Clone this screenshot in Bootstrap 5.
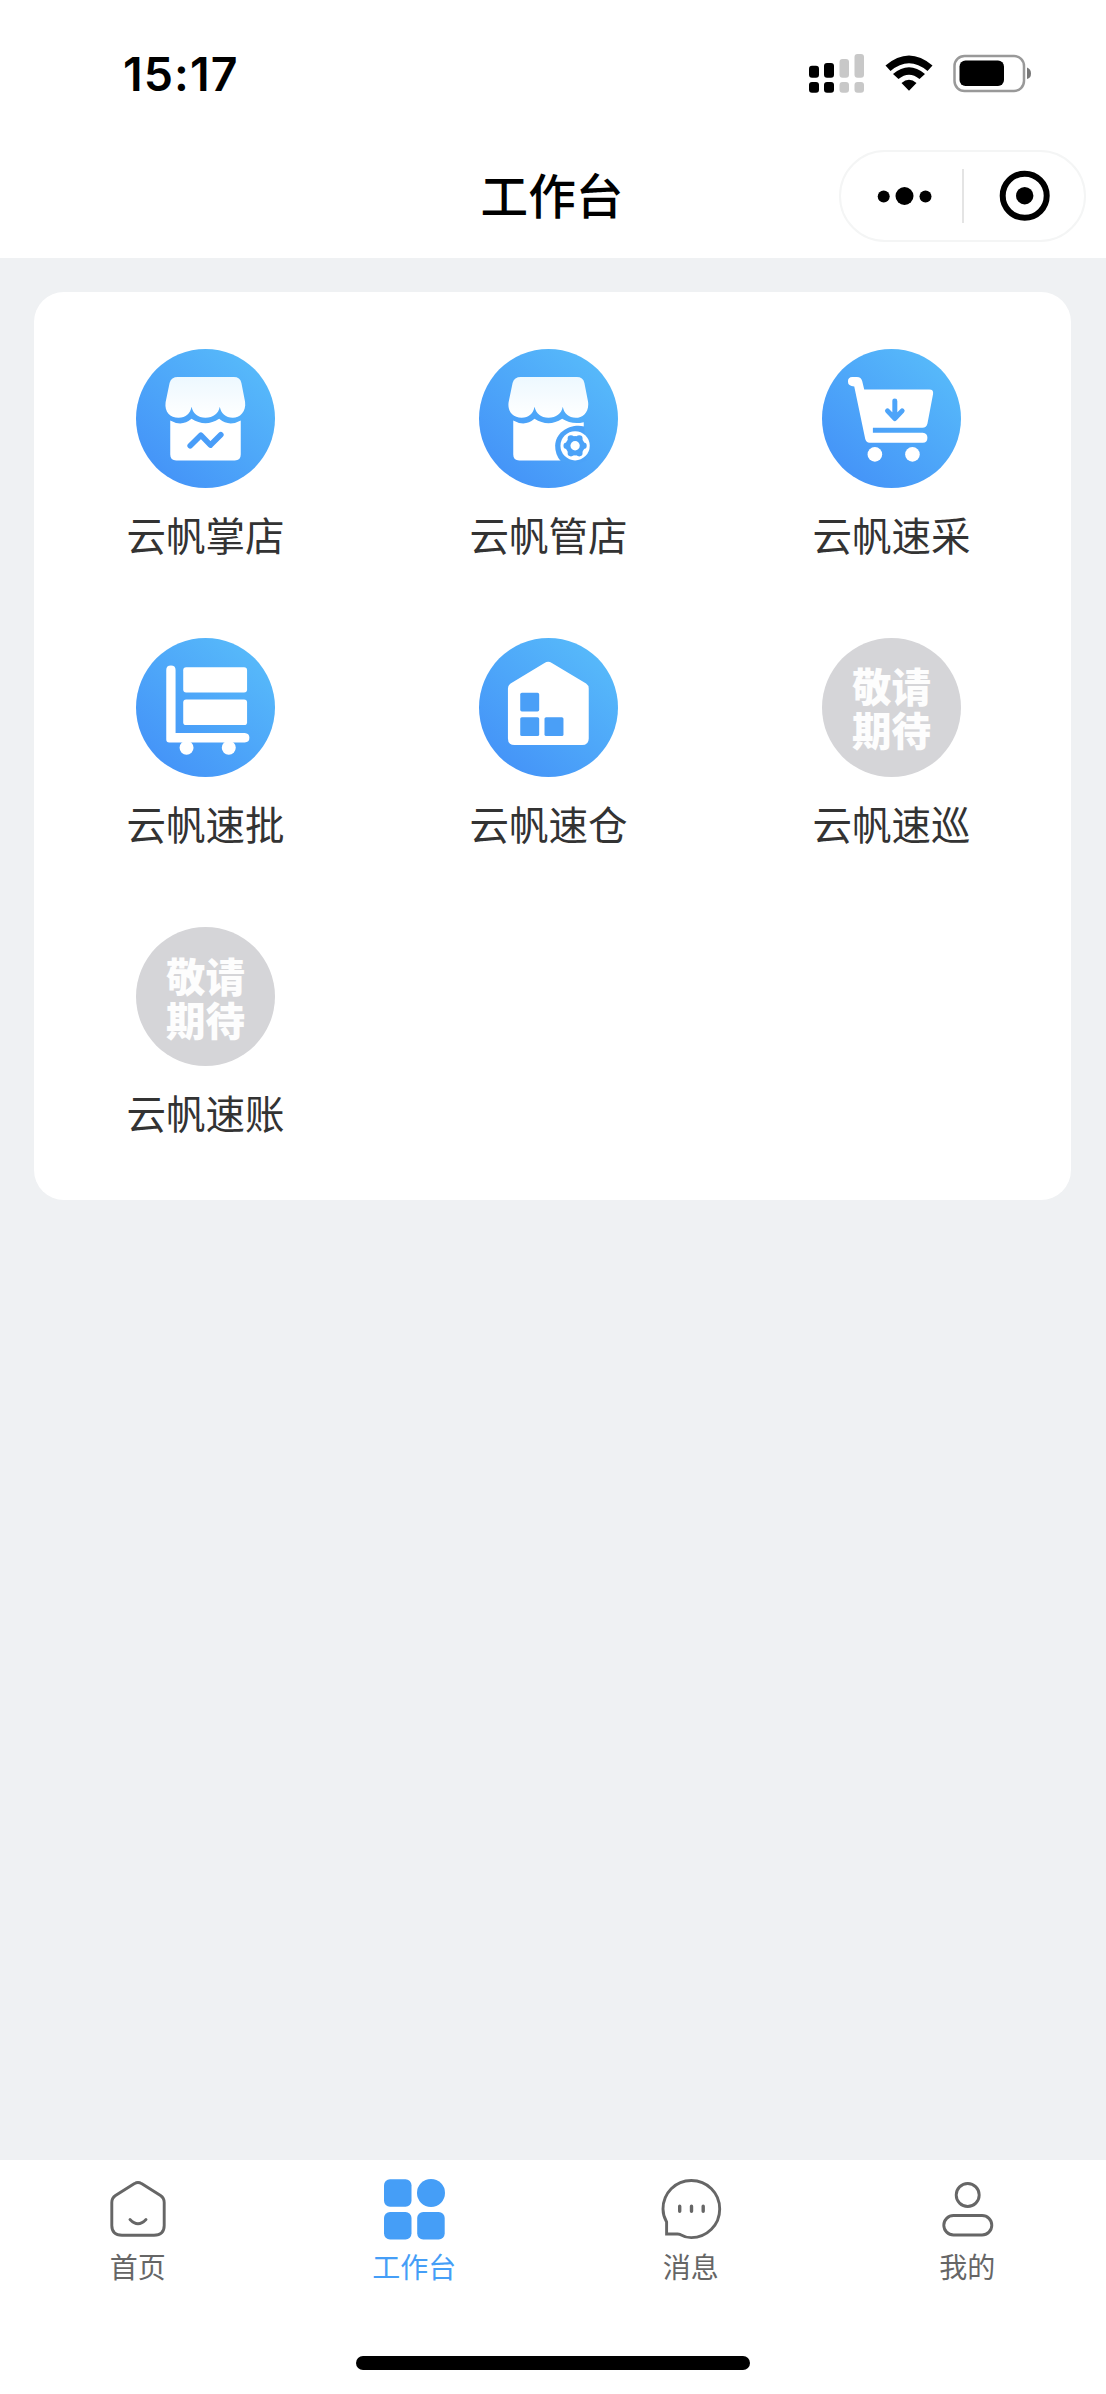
<!DOCTYPE html>
<html lang="zh-CN">
<head>
<meta charset="utf-8">
<meta name="viewport" content="width=device-width, initial-scale=1">
<title>工作台</title>
<link rel="stylesheet" href="https://cdn.jsdelivr.net/npm/bootstrap@5.3.0/dist/css/bootstrap.min.css">
<style>
  body { font-family: "Noto Sans CJK SC", sans-serif; background: #eff1f3; color: #333; }
  .phone { height: 2394px; overflow: hidden; }
  .topbar { height: 258px; }
  .statusbar { height: 146px; padding: 52px 75px 0 123px; }
  .clock { font: 600 46.5px/44px Inter, sans-serif; color: #000; letter-spacing: 1.1px; }
  .titlebar { height: 112px; padding-right: 20px; }
  .page-title { font-size: 47.6px; line-height: 70px; font-weight: 500; color: #000; top: 13px; left: -1px; }
  .capsule { width: 247px; height: 92px; margin-top: 4px; border: 2px solid #f4f5f5; }
  .apps { margin: 34px 35px 0 34px; height: 908px; border-radius: 30px; padding: 56.5px 8px 0 0; }
  .app-item { height: 289.3px; }
  .app-icon { width: 139px; height: 139px; }
  .app-name { font-size: 39.5px; line-height: 56px; margin-top: 18px; }
  .soon { background: #d5d5d8; color: #fdfdfd; font-size: 39.5px; line-height: 44px; font-weight: 900; }
  .tabbar { height: 234px; padding-top: 17px; }
  .tab-icon { width: 66px; height: 64px; }
  .tab-item { color: #666; font-size: 28px; line-height: 40px; }
  .tab-item.active { color: #459ef7; }
  .tab-text { margin: 5px 1px 0 0; }
  .home-bar { width: 394px; height: 14px; background: #000; bottom: 24px; left: 356px; }
</style>
<script src="https://cdn.jsdelivr.net/npm/bootstrap@5.3.0/dist/js/bootstrap.bundle.min.js"></script>
</head>
<body>
<svg width="0" height="0" class="position-absolute">
  <defs>
    <linearGradient id="blue" x1="0.2" y1="0.9" x2="0.85" y2="0.15">
      <stop offset="0" stop-color="#4595f8"/><stop offset="1" stop-color="#56b8fa"/>
    </linearGradient>
    <linearGradient id="awning" x1="0" y1="0" x2="0" y2="1">
      <stop offset="0" stop-color="#edf8ff"/><stop offset="1" stop-color="#fff"/>
    </linearGradient>
  </defs>
</svg>
<div class="phone d-flex flex-column">
  <header class="topbar bg-white">
    <div class="statusbar d-flex justify-content-between align-items-start">
      <div class="clock">15:17</div>
      <svg width="226" height="44" viewBox="0 0 226 44">
        <g fill="#000">
          <rect x="4" y="13.700" width="10" height="12" rx="3"/><rect x="19" y="11" width="10" height="14.700" rx="3"/>
          <rect x="4" y="30" width="10" height="10.700" rx="3"/><rect x="19" y="30" width="10" height="10.700" rx="3"/>
        </g>
        <g fill="#c8c8c8">
          <rect x="34.500" y="7" width="9.500" height="18.700" rx="3"/><rect x="49.500" y="2" width="9.500" height="23.700" rx="3"/>
          <rect x="34.500" y="30" width="9.500" height="10.700" rx="3"/><rect x="49.500" y="30" width="9.500" height="10.700" rx="3"/>
        </g>
        <path d="M80.500 13.500Q104-6.500 127.500 13.500L122.500 19Q104 3.500 85.500 19ZM88 22Q104 8.500 120 22L114.500 27Q104 18.500 93.500 27ZM96.500 31Q104 24.500 111.500 31L104 38.700Z"/>
        <rect x="149.500" y="4" width="69.500" height="35" rx="10" fill="#fff" stroke="#999" stroke-width="2.500"/>
        <rect x="154.500" y="8.500" width="44.500" height="25.500" rx="6"/>
        <path d="M222 15.500Q226 17 226 21.500Q226 26 222 27Z" fill="#777"/>
      </svg>
    </div>
    <div class="titlebar position-relative d-flex justify-content-end align-items-start">
      <h1 class="page-title position-absolute w-100 text-center mb-0">工作台</h1>
      <div class="capsule rounded-pill position-relative">
        <svg class="d-block" width="243" height="88" viewBox="0 0 243 88">
          <circle cx="42.700" cy="44.500" r="6"/><circle cx="63.500" cy="44" r="9"/><circle cx="84.500" cy="44.500" r="6"/>
          <path d="M122 17V71" stroke="#dedede" stroke-width="1.600"/>
          <circle cx="183.700" cy="43.700" r="22" fill="none" stroke="#000" stroke-width="6"/><circle cx="183.700" cy="43.700" r="8.700"/>
        </svg>
      </div>
    </div>
  </header>

  <main class="flex-grow-1">
    <section class="apps bg-white">
      <div class="row row-cols-3 g-0 text-center">
        <div class="col app-item">
          <svg class="app-icon d-block mx-auto" viewBox="108 55 418 418">
            <circle cx="317" cy="264" r="209" fill="url(#blue)"/>
            <path d="M211 270Q246 290 275 265Q317 292 358 265Q388 290 423 270V372Q423 390 405 390H229Q211 390 211 372Z" fill="#fff"/>
            <path d="M234 139H402Q421 139 425 157L436 214C440 245 420 262 399 262C378 262 364 250 360 229C356 250 340 262 317 262C294 262 280 250 275 229C271 250 258 262 236 262C211 262 193 244 197 215L209 157Q214 139 234 139Z" fill="url(#awning)"/>
            <path d="M271 346L303 314L332 344L363 313" fill="none" stroke="#499df8" stroke-width="17" stroke-linecap="round" stroke-linejoin="round"/>
          </svg>
          <div class="app-name">云帆掌店</div>
        </div>
        <div class="col app-item">
          <svg class="app-icon d-block mx-auto" viewBox="118 55 418 418">
            <circle cx="327" cy="264" r="209" fill="url(#blue)"/>
            <g transform="translate(10 0)">
              <path d="M211 270Q246 290 275 265Q317 292 358 265Q388 284 423 275V390H229Q211 390 211 372Z" fill="#fff"/>
              <path d="M234 139H402Q421 139 425 157L436 214C440 245 420 262 399 262C378 262 364 250 360 229C356 250 340 262 317 262C294 262 280 250 275 229C271 250 258 262 236 262C211 262 193 244 197 215L209 157Q214 139 234 139Z" fill="url(#awning)"/>
            </g>
            <path d="M434 288C400 278 348 300 347 346Q347 373 363 391L400 405L440 390Z" fill="#4ba2f8"/>
            <circle cx="407" cy="346" r="44" fill="#fff"/>
            <g fill="#4ba2f8"><circle cx="407" cy="346" r="29"/>
              <circle cx="382" cy="346" r="10"/><circle cx="394.500" cy="324" r="10"/><circle cx="419.500" cy="324" r="10"/><circle cx="432" cy="346" r="10"/><circle cx="419.500" cy="368" r="10"/><circle cx="394.500" cy="368" r="10"/>
            </g>
            <circle cx="407" cy="346" r="14" fill="#fff"/>
          </svg>
          <div class="app-name">云帆管店</div>
        </div>
        <div class="col app-item">
          <svg class="app-icon d-block mx-auto" viewBox="97 55 418 418">
            <circle cx="306" cy="264" r="209" fill="url(#blue)"/>
            <path d="M188 139H202Q215 139 218 152L224 177H420Q433 177 431 190L414 280Q411 292 399 292H250V307H400Q414 308 414 322Q414 337 400 337H240Q230 337 227 326L194 168Q175 167 175 153Q175 139 188 139Z" fill="#fff"/>
            <path d="M316 211V264M294 241L316 264L338 241" fill="none" stroke="#4da4f9" stroke-width="15" stroke-linecap="round" stroke-linejoin="round"/>
            <circle cx="256" cy="372" r="22" fill="#fff"/><circle cx="369" cy="372" r="22" fill="#fff"/>
          </svg>
          <div class="app-name">云帆速采</div>
        </div>
        <div class="col app-item">
          <svg class="app-icon d-block mx-auto" viewBox="108 53 418 418">
            <circle cx="317" cy="262" r="209" fill="url(#blue)"/>
            <g fill="#fff">
              <path d="M199 149Q199 136 213 136Q227 136 227 149V339H435Q449 340 449 353Q449 367 435 367H208Q199 367 199 358Z"/>
              <rect x="250" y="141" width="192" height="76" rx="9"/><rect x="250" y="238" width="192" height="77" rx="9"/>
              <circle cx="260" cy="383" r="21"/><circle cx="387" cy="383" r="21"/>
            </g>
          </svg>
          <div class="app-name">云帆速批</div>
        </div>
        <div class="col app-item">
          <svg class="app-icon d-block mx-auto" viewBox="118 53 418 418">
            <circle cx="327" cy="262" r="209" fill="url(#blue)"/>
            <path d="M315 128Q326 121 337 128L440 190Q448 195 448 205V355Q448 375 428 375H225Q205 375 205 355V205Q205 195 213 190Z" fill="#fff"/>
            <g fill="#4a9ff7"><rect x="242" y="218" width="57" height="56" rx="5"/><rect x="242" y="291" width="57" height="57" rx="5"/><rect x="315" y="291" width="57" height="57" rx="5"/></g>
          </svg>
          <div class="app-name">云帆速仓</div>
        </div>
        <div class="col app-item">
          <div class="app-icon soon rounded-circle mx-auto d-flex flex-column justify-content-center"><div>敬请</div><div>期待</div></div>
          <div class="app-name">云帆速巡</div>
        </div>
        <div class="col app-item">
          <div class="app-icon soon rounded-circle mx-auto d-flex flex-column justify-content-center"><div>敬请</div><div>期待</div></div>
          <div class="app-name">云帆速账</div>
        </div>
      </div>
    </section>
  </main>

  <nav class="tabbar bg-white position-relative">
    <div class="row row-cols-4 g-0 text-center">
      <div class="col tab-item">
        <svg class="tab-icon d-block mx-auto" viewBox="0 0 66 64" fill="none" stroke="#666" stroke-width="2.900" stroke-linecap="round">
          <path d="M29.500 6.600Q33 4.200 36.500 6.600L55.500 18.500Q59.200 21 59.200 25.500V48.500Q59.200 58.200 49 58.200H17Q6.800 58.200 6.800 48.500V25.500Q6.800 21 10.500 18.500Z"/>
          <path d="M25 42.500Q33 51 41 42.500"/>
        </svg>
        <div class="tab-text">首页</div>
      </div>
      <div class="col tab-item active">
        <svg class="tab-icon d-block mx-auto" viewBox="0 0 66 64" fill="#459ef7">
          <rect x="2" y="2.300" width="27.500" height="27.500" rx="6"/><circle cx="49" cy="16" r="14"/>
          <rect x="2" y="35" width="27.500" height="27.500" rx="6"/><rect x="35.200" y="35" width="27.500" height="27.500" rx="6"/>
        </svg>
        <div class="tab-text">工作台</div>
      </div>
      <div class="col tab-item">
        <svg class="tab-icon d-block mx-auto" viewBox="0 0 66 64" fill="none" stroke="#666" stroke-width="2.900">
          <path d="M8.600 57V45C6 40.500 5 37 5 32C5 16 17.500 3.500 33.300 3.500S61.700 16 61.700 32S49 60.600 33.300 60.600Q27.500 60.600 22 57.400Q21 57 19.500 57Z"/>
          <path d="M21.700 29.300V34.300M33.500 29.300V34.300M45.200 29.300V34.300" stroke-width="3.400" stroke-linecap="round"/>
        </svg>
        <div class="tab-text">消息</div>
      </div>
      <div class="col tab-item">
        <svg class="tab-icon d-block mx-auto" viewBox="0 0 66 64" fill="none" stroke="#666" stroke-width="2.900">
          <circle cx="32.700" cy="18" r="11.500"/><rect x="8.800" y="38.500" width="48" height="19.500" rx="9.750"/>
        </svg>
        <div class="tab-text">我的</div>
      </div>
    </div>
    <div class="home-bar rounded-pill position-absolute"></div>
  </nav>
</div>
</body>
</html>
